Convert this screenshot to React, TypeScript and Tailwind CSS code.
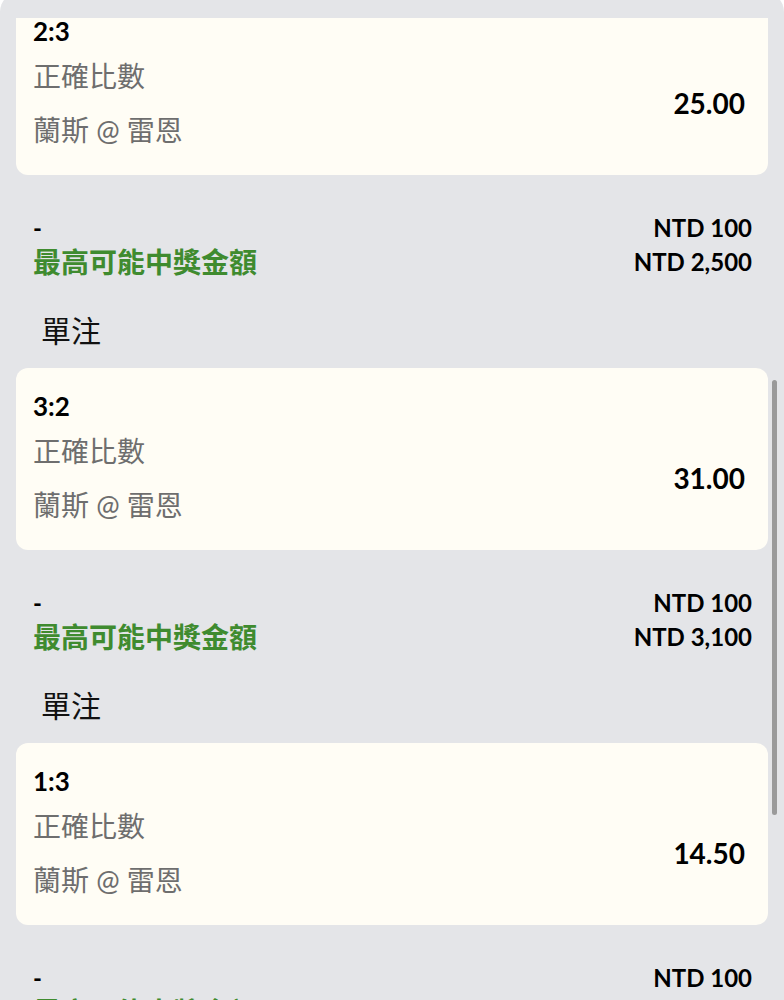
const bets = [
  { score: "2:3", odds: "25.00", stake: "NTD 100", payout: "NTD 2,500" },
  { score: "3:2", odds: "31.00", stake: "NTD 100", payout: "NTD 3,100" },
  { score: "1:3", odds: "14.50", stake: "NTD 100", payout: "NTD 1,450" },
];

function BetCard({ score, odds }: { score: string; odds: string }) {
  return (
    <div className="bg-[#fffdf5] rounded-xl pl-[17px] pr-[23px] pt-6 pb-[25px]">
      <div className="text-[26px] leading-[28px] font-bold text-black">{score}</div>
      <div className="mt-[11px] flex items-center justify-between">
        <div className="flex flex-col gap-[14px] text-[28px] leading-[40px] text-[#6e6e6e]">
          <div>正確比數</div>
          <div>蘭斯 @ 雷恩</div>
        </div>
        <div className="text-[28px] font-bold text-black">{odds}</div>
      </div>
    </div>
  );
}

function Summary({ stake, payout }: { stake: string; payout: string }) {
  return (
    <div className="mt-9 pl-[17px] pr-4">
      <div className="flex justify-between items-center h-[34px]">
        <span className="text-[24px] font-bold text-black">-</span>
        <span className="text-[24px] font-bold text-black">{stake}</span>
      </div>
      <div className="flex justify-between items-center h-[34px]">
        <span className="text-[28px] font-bold text-[#3f8b2f]">最高可能中獎金額</span>
        <span className="text-[24px] font-bold text-black">{payout}</span>
      </div>
    </div>
  );
}

export default function App() {
  return (
    <div
      className="relative w-[784px] h-[1000px] overflow-hidden bg-white"
      style={{ fontFamily: "Lato, 'Noto Sans CJK TC', sans-serif" }}
    >
      <div className="-mt-2 h-[1008px] bg-[#e4e5e8] rounded-t-[20px] flex flex-col">
        <div className="h-[26px] shrink-0" />
        <div className="flex-1 overflow-hidden px-4">
          <div className="-mt-[25px]">
            {bets.map((b, i) => (
              <div key={i}>
                <BetCard score={b.score} odds={b.odds} />
                <Summary stake={b.stake} payout={b.payout} />
                <div className="mt-[31px] mb-[18px] pl-[25px] text-[30px] leading-[40px] text-[#111]">單注</div>
              </div>
            ))}
          </div>
        </div>
      </div>
      <div className="absolute left-[772px] top-[380px] w-[5px] h-[435px] rounded-full bg-[#9a9a9a]" />
    </div>
  );
}
